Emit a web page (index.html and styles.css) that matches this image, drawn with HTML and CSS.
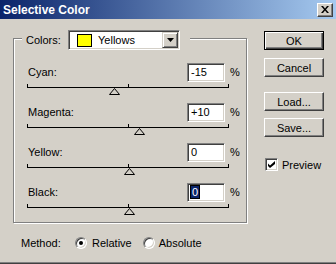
FILE: index.html
```html
<!DOCTYPE html>
<html lang="en">
<head>
  <meta charset="UTF-8">
  <title>Selective Color</title>
  <link rel="stylesheet" href="styles.css">
</head>
<body>

  <div class="window">
    <div class="titlebar">
      <span class="title">Selective Color</span>
      <span class="close">
        <svg width="8" height="7" viewBox="0 0 8 7"><path d="M0 0h2l2 2.5 2-2.5h2l-3 3.5 3 3.5h-2l-2-2.5-2 2.5h-2l3-3.5z" fill="#000"/></svg>
      </span>
    </div>

    <div class="client">
      <div class="main">
        <div class="group">
          <div class="group-head">
            <span class="head-label">Colors:</span>
            <div class="combo">
              <span class="swatch"></span>
              <span class="combo-text">Yellows</span>
              <span class="combo-btn">
                <svg width="7" height="4" viewBox="0 0 7 4"><path d="M0 0h7l-3.5 4z" fill="#000"/></svg>
              </span>
            </div>
          </div>

          <div class="rows">
            <div class="row">
              <div class="row-head">
                <span class="row-label">Cyan:</span>
                <span class="field">-15</span>
                <span class="pct">%</span>
              </div>
              <div class="track">
                <svg class="thumb" style="left:81px" width="11" height="7" viewBox="0 0 11 7"><path d="M5.5 0.5L0.5 6.5H10.5Z" fill="none" stroke="#000"/></svg>
              </div>
            </div>

            <div class="row">
              <div class="row-head">
                <span class="row-label">Magenta:</span>
                <span class="field">+10</span>
                <span class="pct">%</span>
              </div>
              <div class="track">
                <svg class="thumb" style="left:106px" width="11" height="7" viewBox="0 0 11 7"><path d="M5.5 0.5L0.5 6.5H10.5Z" fill="none" stroke="#000"/></svg>
              </div>
            </div>

            <div class="row">
              <div class="row-head">
                <span class="row-label">Yellow:</span>
                <span class="field">0</span>
                <span class="pct">%</span>
              </div>
              <div class="track">
                <svg class="thumb" style="left:96px" width="11" height="7" viewBox="0 0 11 7"><path d="M5.5 0.5L0.5 6.5H10.5Z" fill="none" stroke="#000"/></svg>
              </div>
            </div>

            <div class="row">
              <div class="row-head">
                <span class="row-label">Black:</span>
                <span class="field"><span class="selected">0</span></span>
                <span class="pct">%</span>
              </div>
              <div class="track">
                <svg class="thumb" style="left:96px" width="11" height="7" viewBox="0 0 11 7"><path d="M5.5 0.5L0.5 6.5H10.5Z" fill="none" stroke="#000"/></svg>
              </div>
            </div>
          </div>
        </div>

        <div class="method">
          <span class="method-label">Method:</span>
          <label class="radio-item"><span class="radio checked"></span>Relative</label>
          <label class="radio-item second"><span class="radio"></span>Absolute</label>
        </div>
      </div>

      <div class="side">
        <button class="btn default">OK</button>
        <button class="btn cancel">Cancel</button>
        <button class="btn load">Load...</button>
        <button class="btn save">Save...</button>
        <label class="check-item">
          <span class="checkbox">
            <svg width="7" height="7" viewBox="0 0 7 7"><path d="M0 2.5L2 4.5L7 0V3L2 7L0 5Z" fill="#000"/></svg>
          </span>
          Preview
        </label>
      </div>
    </div>
  </div>

</body>
</html>
```

FILE: styles.css
```css
body {
  margin: 0;
  background: #d4d0c8;
  font: 11px "Liberation Sans", Arial, sans-serif;
  color: #000;
}

.window {
  width: 336px;
  height: 264px;
  box-sizing: border-box;
  border-bottom: 1px solid #404040;
  box-shadow: inset 0 -1px #808080;
  background: #d4d0c8;
}

/* title bar */
.titlebar {
  height: 19px;
  display: flex;
  align-items: center;
  justify-content: space-between;
  background: linear-gradient(to right, #0a246a, #a6caf0);
}

.title {
  color: #fff;
  font-weight: bold;
  font-size: 12px;
  padding-left: 3px;
}

.close {
  width: 16px;
  height: 14px;
  box-sizing: border-box;
  margin-right: 3px;
  display: flex;
  align-items: center;
  justify-content: center;
  background: #d4d0c8;
  border: 1px solid;
  border-color: #fff #404040 #404040 #fff;
  box-shadow: inset -1px -1px #808080;
}

.client {
  display: flex;
}

.main {
  width: 264px;
}

/* group box */
.group {
  margin: 19px 0 0 13px;
  width: 234px;
  height: 185px;
  box-sizing: border-box;
  border: 1px solid #808080;
  box-shadow: inset 1px 1px #fff, 1px 1px #fff;
}

.group-head {
  display: flex;
  align-items: center;
  width: fit-content;
  margin: -9px 0 0 8px;
  padding: 0 10px 0 4px;
  background: #d4d0c8;
}

.head-label {
  width: 42px;
}

.combo {
  width: 112px;
  height: 20px;
  box-sizing: border-box;
  display: flex;
  align-items: center;
  background: #fff;
  border: 1px solid;
  border-color: #808080 #fff #fff #808080;
  box-shadow: inset 1px 1px #404040, inset -1px -1px #d4d0c8;
  padding: 1px;
}

.swatch {
  width: 15px;
  height: 13px;
  box-sizing: border-box;
  margin-left: 7px;
  border: 1px solid #000;
  background: #ffff00;
}

.combo-text {
  flex: 1;
  margin-left: 6px;
}

.combo-btn {
  width: 16px;
  height: 16px;
  box-sizing: border-box;
  display: flex;
  align-items: center;
  justify-content: center;
  background: #d4d0c8;
  border: 1px solid;
  border-color: #d4d0c8 #404040 #404040 #d4d0c8;
  box-shadow: inset 1px 1px #fff, inset -1px -1px #808080;
}

/* slider rows */
.rows {
  padding: 12px 0 0 13px;
}

.row {
  height: 40px;
}

.row-head {
  width: 211px;
  height: 20px;
  display: flex;
  align-items: center;
}

.row-label {
  flex: 1;
  padding-left: 1px;
}

.field {
  width: 38px;
  height: 19px;
  box-sizing: border-box;
  display: flex;
  align-items: center;
  background: #fff;
  border: 1px solid;
  border-color: #808080 #fff #fff #808080;
  box-shadow: inset 1px 1px #404040, inset -1px -1px #d4d0c8;
  padding-left: 3px;
}

.selected {
  background: #0a246a;
  color: #fff;
  padding: 0 1px;
  outline: 1px solid #000;
}

.pct {
  width: 8px;
  margin-left: 5px;
}

.track {
  position: relative;
  width: 202px;
  height: 4px;
  margin-top: 2px;
  box-sizing: border-box;
  border: 1px solid #000;
  border-top: 0;
  background: linear-gradient(#000, #000) 100px 0 / 1px 100% no-repeat;
}

.thumb {
  position: absolute;
  top: 4px;
}

/* method */
.method {
  display: flex;
  align-items: center;
  height: 12px;
  margin-top: 14px;
  padding-left: 21px;
}

.method-label {
  width: 54px;
}

.radio-item {
  display: flex;
  align-items: center;
  gap: 5px;
}

.radio-item.second {
  margin-left: 11px;
  gap: 4px;
}

.radio {
  width: 12px;
  height: 12px;
  box-sizing: border-box;
  border-radius: 50%;
  border: 1px solid;
  border-color: #808080 #fff #fff #808080;
  box-shadow: inset 1px 1px #404040, inset -1px -1px #d4d0c8;
  background: #fff;
  display: flex;
  align-items: center;
  justify-content: center;
}

.radio.checked::after {
  content: "";
  width: 4px;
  height: 4px;
  border-radius: 50%;
  background: #000;
}

/* right column */
.side {
  display: flex;
  flex-direction: column;
  align-items: flex-start;
  padding-top: 12px;
}

.btn {
  width: 60px;
  height: 19px;
  box-sizing: border-box;
  padding: 0;
  font: inherit;
  color: #000;
  background: #d4d0c8;
  border: 1px solid;
  border-color: #fff #404040 #404040 #fff;
  box-shadow: inset -1px -1px #808080;
}

.btn.default {
  border: 1px solid #000;
  box-shadow: inset 1px 1px #fff, inset -1px -1px #404040, inset -2px -2px #808080;
}

.btn.cancel {
  margin-top: 8px;
}

.btn.load {
  margin-top: 15px;
}

.btn.save {
  margin-top: 7px;
}

.check-item {
  display: flex;
  align-items: center;
  gap: 4px;
  margin: 21px 0 0 1px;
}

.checkbox {
  width: 13px;
  height: 13px;
  box-sizing: border-box;
  display: flex;
  align-items: center;
  justify-content: center;
  background: #fff;
  border: 1px solid;
  border-color: #808080 #fff #fff #808080;
  box-shadow: inset 1px 1px #404040, inset -1px -1px #d4d0c8;
}
```
